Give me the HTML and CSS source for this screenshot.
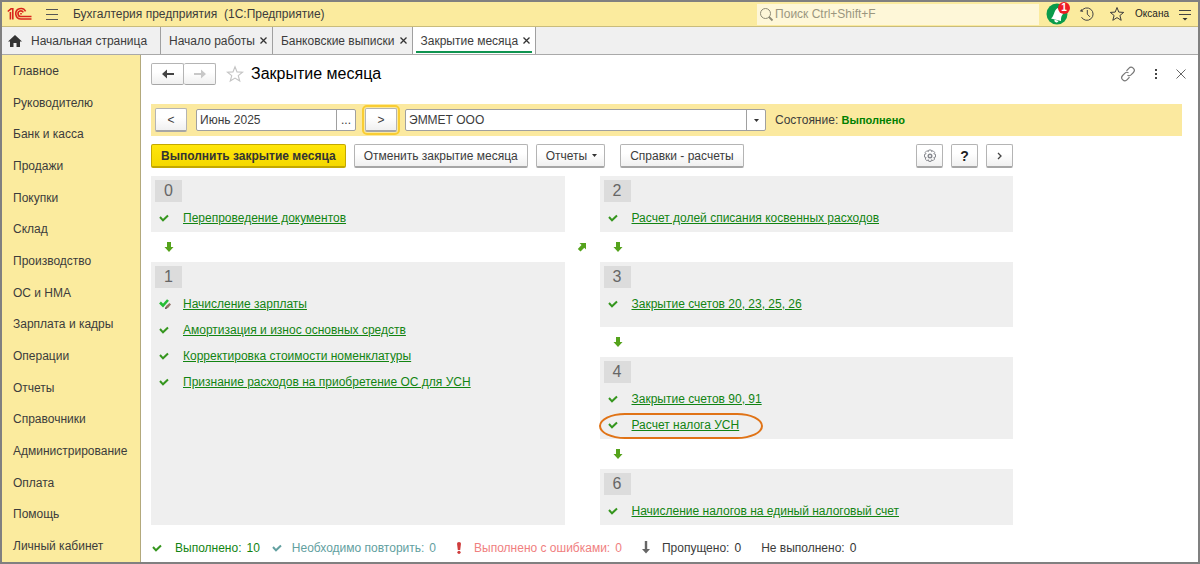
FILE: index.html
```
<!DOCTYPE html>
<html lang="ru">
<head>
    <meta charset="UTF-8">
    <meta name="viewport" content="width=device-width, initial-scale=1.0">
    <title>Закрытие месяца</title>
    <link rel="stylesheet" href="styles.css">
</head>
<body>
    <svg class="sprite" aria-hidden="true">
        <symbol id="check" viewBox="0 0 10 8"><path d="M1 3 4 6.300 9 1.500" fill="none" stroke="currentColor" stroke-width="2"/></symbol>
        <symbol id="down" viewBox="0 0 10 12"><path d="M3 1h4v5h2.500L5 11 .5 6H3z" fill="#55a31c"/></symbol>
        <symbol id="star" viewBox="0 0 16 16"><path d="M8 1.500l1.800 4.600 4.900.3-3.800 3.100 1.300 4.800L8 11.600l-4.200 2.700 1.300-4.800L1.300 6.400l4.900-.3z" fill="none" stroke="currentColor"/></symbol>
        <symbol id="close" viewBox="0 0 7 7"><path d="M.5.5l6 6M6.500.5l-6 6" stroke="#333" stroke-width="1.300"/></symbol>
    </svg>

    <header class="topbar">
        <svg class="logo" viewBox="0 0 26 14" role="img" aria-label="1С">
            <g fill="none" stroke="#d9261c" stroke-width="1.600">
                <path d="M.8 4.500 4 1.800h1.800V12.500M3.400 12.500V5"/>
                <path d="M18.600 4.400A5.200 5.200 0 1 0 14 12h10.500"/>
                <path d="M16.300 5.400A2.800 2.800 0 1 0 14 9.500h10.500"/>
                <path d="M13.200 6.800h1.600"/>
            </g>
        </svg>
        <button class="icon-btn burger" aria-label="Меню">
            <svg width="14" height="12" viewBox="0 0 14 12"><path d="M1 1.500h12M1 6.500h12M1 11.500h12" stroke="#555"/></svg>
        </button>
        <span class="app-name">Бухгалтерия предприятия&nbsp; (1С:Предприятие)</span>
        <label class="search">
            <svg width="15" height="15" viewBox="0 0 15 15" fill="none" stroke="#8d8a75"><circle cx="6.500" cy="6.500" r="5"/><path d="M10 10l3.500 3.500" stroke-width="1.800"/></svg>
            <input type="search" placeholder="Поиск Ctrl+Shift+F" aria-label="Поиск">
        </label>
        <button class="icon-btn bell" aria-label="Уведомления">
            <svg width="22" height="22" viewBox="0 0 22 22"><circle cx="11" cy="11" r="10.500" fill="#0a9b4b"/><path d="M5 15.500C8.500 13 7.500 8 11.500 5l6 5.500c-2 2-2.500 3.500-2.500 7.500z" fill="#fff"/><path d="M8.500 16.500l4 1.500a2 2 0 0 1-4-1.500z" fill="#fff"/></svg>
            <span class="badge">1</span>
        </button>
        <button class="icon-btn clock" aria-label="История">
            <svg width="16" height="16" viewBox="0 0 16 16" fill="none" stroke="#444"><path d="M2.400 5.200a6.200 6.200 0 1 1 .1 6M8.300 4v4.200l2.600 2.600"/><path d="M.8 5.200l3.500.8-1.800-3z" fill="#444" stroke="none"/></svg>
        </button>
        <button class="icon-btn" aria-label="Избранное"><svg width="16" height="16"><use href="#star"/></svg></button>
        <span class="user">Оксана</span>
        <button class="icon-btn" aria-label="Настройки окна">
            <svg width="14" height="14" viewBox="0 0 14 14"><path d="M1 3.500h12M1 7.500h12" stroke="#444"/><path d="M4.500 11h5L7 13.500z" fill="#333"/></svg>
        </button>
    </header>

    <nav class="tabs">
        <a class="tab home" href="#">
            <svg width="14" height="12" viewBox="0 0 14 12"><path d="M7 0l7 6.500h-2V12H8.500V8h-3v4H2V6.500H0z" fill="#333"/></svg>
            Начальная страница
        </a>
        <div class="tab"><a href="#">Начало работы</a><button class="tab-close" aria-label="Закрыть"><svg width="7" height="7"><use href="#close"/></svg></button></div>
        <div class="tab"><a href="#">Банковские выписки</a><button class="tab-close" aria-label="Закрыть"><svg width="7" height="7"><use href="#close"/></svg></button></div>
        <div class="tab active"><a href="#">Закрытие месяца</a><button class="tab-close" aria-label="Закрыть"><svg width="7" height="7"><use href="#close"/></svg></button></div>
    </nav>

    <div class="workspace">
        <nav class="sidebar">
            <a href="#">Главное</a>
            <a href="#">Руководителю</a>
            <a href="#">Банк и касса</a>
            <a href="#">Продажи</a>
            <a href="#">Покупки</a>
            <a href="#">Склад</a>
            <a href="#">Производство</a>
            <a href="#">ОС и НМА</a>
            <a href="#">Зарплата и кадры</a>
            <a href="#">Операции</a>
            <a href="#">Отчеты</a>
            <a href="#">Справочники</a>
            <a href="#">Администрирование</a>
            <a href="#">Оплата</a>
            <a href="#">Помощь</a>
            <a href="#">Личный кабинет</a>
        </nav>

        <main class="content">
            <div class="title-row">
                <div class="history">
                    <button class="btn" aria-label="Назад"><svg width="14" height="10" viewBox="0 0 14 10"><path d="M1 5l5-4.500V4h7v2H6v3.500z" fill="#444"/></svg></button>
                    <button class="btn" aria-label="Вперед" disabled><svg width="14" height="10" viewBox="0 0 14 10"><path d="M13 5L8 .5V4H1v2h7v3.500z" fill="#c8c8c8"/></svg></button>
                </div>
                <button class="icon-btn fav" aria-label="В избранное"><svg width="18" height="18"><use href="#star"/></svg></button>
                <h1>Закрытие месяца</h1>
                <div class="window-tools">
                    <button class="icon-btn" aria-label="Ссылка">
                        <svg width="16" height="16" viewBox="0 0 16 16" fill="none" stroke="#777" stroke-width="1.200"><path d="M6.500 4.800l2.300-2.500a3 3 0 0 1 4.600 4.200l-2.400 2.400a3 3 0 0 1-3.500.4"/><path d="M9.500 11.200l-2.300 2.500a3 3 0 0 1-4.600-4.200L5 7.100a3 3 0 0 1 3.500-.4"/></svg>
                    </button>
                    <button class="icon-btn" aria-label="Еще"><svg width="4" height="12" fill="#444"><rect x="1" y="1" width="2" height="2"/><rect x="1" y="5" width="2" height="2"/><rect x="1" y="9" width="2" height="2"/></svg></button>
                    <button class="icon-btn" aria-label="Закрыть"><svg width="10" height="10"><path d="M.5.5l9 9M9.500.5l-9 9" stroke="#666"/></svg></button>
                </div>
            </div>

            <div class="period">
                <button class="btn step" aria-label="Предыдущий месяц">&lt;</button>
                <div class="field month">
                    <input type="text" value="Июнь 2025" aria-label="Период">
                    <button aria-label="Выбрать период">...</button>
                </div>
                <button class="btn step focused" aria-label="Следующий месяц">&gt;</button>
                <div class="field company">
                    <input type="text" value="ЭММЕТ ООО" aria-label="Организация">
                    <button aria-label="Выбрать организацию"><svg width="5" height="3"><path d="M0 0h5L2.500 3z" fill="#333"/></svg></button>
                </div>
                <span class="state">Состояние: <strong>Выполнено</strong></span>
            </div>

            <div class="toolbar">
                <button class="btn primary">Выполнить закрытие месяца</button>
                <button class="btn">Отменить закрытие месяца</button>
                <button class="btn reports">Отчеты <svg width="5" height="3"><path d="M0 0h5L2.500 3z" fill="#333"/></svg></button>
                <button class="btn refs">Справки - расчеты</button>
                <div class="toolbar-right">
                    <button class="btn" aria-label="Настройка">
                        <svg width="14" height="14" viewBox="0 0 14 14" fill="none" stroke="#87898f"><circle cx="7" cy="7" r="1.800" stroke-width="1.400"/><path d="M5.800 1h2.400l.4 1.600 1.400-.9 1.700 1.700-.9 1.500 1.700.4v2.800l-1.700.4.9 1.500-1.700 1.700-1.500-.9-.4 1.600H5.800l-.4-1.600-1.500.9L2.200 10l.9-1.500-1.600-.4V5.300l1.600-.4-.9-1.500 1.700-1.700 1.500.9z"/></svg>
                    </button>
                    <button class="btn help">?</button>
                    <button class="btn" aria-label="Развернуть"><svg width="6" height="8"><path d="M1 1l3 3-3 3" fill="none" stroke="#444" stroke-width="1.300"/></svg></button>
                </div>
            </div>

            <div class="stages">
                <div class="column">
                    <section class="stage">
                        <h2>0</h2>
                        <ul>
                            <li><svg class="check"><use href="#check"/></svg><a href="#">Перепроведение документов</a></li>
                        </ul>
                    </section>
                    <div class="arrow"><svg width="10" height="12"><use href="#down"/></svg></div>
                    <section class="stage grow">
                        <h2>1</h2>
                        <ul>
                            <li>
                                <svg class="check-edit" viewBox="0 0 13 12"><path d="M1 4.500l3 3L9 2" fill="none" stroke="#26bd35" stroke-width="2.600"/><path d="M6 11l1-3 3.500-3L12 6.500 9 10z" fill="#927568"/><path d="M6 11l.8-2 1.200 1.200z" fill="#333"/></svg>
                                <a href="#">Начисление зарплаты</a>
                            </li>
                            <li><svg class="check"><use href="#check"/></svg><a href="#">Амортизация и износ основных средств</a></li>
                            <li><svg class="check"><use href="#check"/></svg><a href="#">Корректировка стоимости номенклатуры</a></li>
                            <li><svg class="check"><use href="#check"/></svg><a href="#">Признание расходов на приобретение ОС для УСН</a></li>
                        </ul>
                    </section>
                </div>

                <div class="link-up">
                    <svg width="10" height="10" viewBox="0 0 10 10"><path d="M2.500 1H9v6.500L7.300 5.800 3.500 9.500.8 7l3.700-4z" fill="#55a31c"/></svg>
                </div>

                <div class="column">
                    <section class="stage">
                        <h2>2</h2>
                        <ul>
                            <li><svg class="check"><use href="#check"/></svg><a href="#">Расчет долей списания косвенных расходов</a></li>
                        </ul>
                    </section>
                    <div class="arrow"><svg width="10" height="12"><use href="#down"/></svg></div>
                    <section class="stage tall">
                        <h2>3</h2>
                        <ul>
                            <li><svg class="check"><use href="#check"/></svg><a href="#">Закрытие счетов 20, 23, 25, 26</a></li>
                        </ul>
                    </section>
                    <div class="arrow"><svg width="10" height="12"><use href="#down"/></svg></div>
                    <section class="stage">
                        <h2>4</h2>
                        <ul>
                            <li><svg class="check"><use href="#check"/></svg><a href="#">Закрытие счетов 90, 91</a></li>
                            <li class="marked"><svg class="check"><use href="#check"/></svg><a href="#">Расчет налога УСН</a></li>
                        </ul>
                    </section>
                    <div class="arrow"><svg width="10" height="12"><use href="#down"/></svg></div>
                    <section class="stage">
                        <h2>6</h2>
                        <ul>
                            <li><svg class="check"><use href="#check"/></svg><a href="#">Начисление налогов на единый налоговый счет</a></li>
                        </ul>
                    </section>
                </div>
            </div>

            <footer class="legend">
                <span class="done"><svg class="check"><use href="#check"/></svg>Выполнено: <b>10</b></span>
                <span class="repeat"><svg class="check"><use href="#check"/></svg>Необходимо повторить: <b>0</b></span>
                <span class="errors"><svg width="6" height="12" viewBox="0 0 6 12" fill="#cf3d3d"><path d="M1 1.500a2 1.500 0 0 1 4 0L4.200 8H1.800z"/><circle cx="3" cy="10.300" r="1.600"/></svg>Выполнено с ошибками: <b>0</b></span>
                <span class="skipped"><svg width="8" height="13" viewBox="0 0 8 13"><path d="M2.800 0h2.400v8H8l-4 4.500L0 8h2.800z" fill="#666"/></svg>Пропущено: <b>0</b></span>
                <span>Не выполнено: <b>0</b></span>
            </footer>
        </main>
    </div>
</body>
</html>
```
FILE: styles.css
```
*,
*::after {
    margin: 0;
    padding: 0;
    box-sizing: border-box;
}

body {
    min-height: 100vh;
    display: flex;
    flex-direction: column;
    border: 2px solid #808080;
    background: #fff;
    color: #3c3c3c;
    font-family: "Liberation Sans", Arial, sans-serif;
    font-size: 12px;
    line-height: 16px;
}

a {
    color: inherit;
    text-decoration: none;
}

button,
input {
    font: inherit;
    color: inherit;
}

svg {
    flex: none;
    display: block;
}

.sprite {
    display: none;
}

.icon-btn {
    display: flex;
    align-items: center;
    justify-content: center;
    background: none;
    border: none;
    cursor: pointer;
}

/* top bar */
.topbar {
    display: flex;
    align-items: center;
    height: 25px;
    padding: 0 6px 0 5px;
    background: #fbeb9e;
    border-bottom: 1px solid #c9bc7c;
}

.logo {
    width: 26px;
    height: 14px;
}

.burger {
    margin: 0 14px 0 12px;
}

.app-name {
    flex: 1;
}

.search {
    display: flex;
    align-items: center;
    gap: 1px;
    width: 282px;
    height: 21px;
    padding-left: 2px;
    margin-right: 7px;
    background: #fef7d8;
}

.search input {
    flex: 1;
    min-width: 0;
    background: none;
    border: none;
    outline: none;
}

.search input::placeholder {
    color: #9a967f;
}

.bell {
    position: relative;
    margin-right: 11px;
}

.badge {
    position: absolute;
    top: -1px;
    right: -2px;
    width: 12px;
    height: 12px;
    border-radius: 50%;
    background: #ee1c25;
    color: #fff;
    font-size: 10px;
    font-weight: bold;
    line-height: 12px;
}

.clock {
    margin-right: 14px;
}

.user {
    margin: 0 9px 0 10px;
    font-size: 10px;
    color: #222;
}

/* open windows */
.tabs {
    display: flex;
    height: 28px;
    background: #f0f0f0;
    border-bottom: 1px solid #a9a9a9;
}

.tab {
    display: flex;
    align-items: center;
    gap: 5px;
    padding: 0 5px 0 8px;
    border-right: 1px solid #a0a0a0;
}

.home {
    gap: 9px;
    width: 159px;
    padding-left: 6px;
}

.tab.active {
    background: linear-gradient(#0f9450, #0f9450) 3px 24px / calc(100% - 6px) 2px no-repeat #fff;
}

.tab-close {
    width: 7px;
    height: 7px;
    background: none;
    border: none;
}

.workspace {
    flex: 1;
    display: flex;
}

.sidebar {
    display: flex;
    flex-direction: column;
    width: 139px;
    background: #fbeb9e;
    border-right: 1px solid #b3a97c;
}

.sidebar a {
    flex: 1;
    display: flex;
    align-items: center;
    padding-left: 11px;
}

.content {
    flex: 1;
    display: flex;
    flex-direction: column;
    padding: 8px 16px 0 10px;
}

/* form title */
.title-row {
    display: flex;
    align-items: center;
    height: 22px;
    margin-bottom: 19px;
}

.btn {
    display: flex;
    align-items: center;
    justify-content: center;
    height: 24px;
    padding: 0 9px;
    background: linear-gradient(#fff 40%, #f0f0f0);
    border: 1px solid #b4b4b4;
    border-bottom: 2px solid #a6a6a6;
    border-radius: 2px;
    white-space: nowrap;
    cursor: pointer;
}

.history {
    display: flex;
}

.history .btn {
    width: 33px;
    height: 22px;
    padding: 0;
    border-bottom-width: 1px;
}

.history .btn + .btn {
    border-left: none;
    width: 32px;
}

.fav {
    margin: 0 7px 0 10px;
    color: #c4c4c4;
}

h1 {
    flex: 1;
    font-size: 16px;
    font-weight: normal;
    line-height: 22px;
    color: #000;
}

.window-tools {
    display: flex;
    align-items: center;
    gap: 18px;
    margin-right: -4px;
}

/* period and company */
.period {
    display: flex;
    align-items: center;
    height: 32px;
    padding-left: 4px;
    background: #fbe99f;
}

.step {
    width: 32px;
    padding: 0;
}

.focused {
    outline: 2px solid #f9cd33;
    outline-offset: 1px;
}

.field {
    display: flex;
    height: 22px;
    border: 1px solid #a0a0a0;
    border-radius: 2px;
    background: #fff;
}

.field input {
    flex: 1;
    min-width: 0;
    padding-left: 3px;
    border: none;
    outline: none;
    background: none;
}

.field button {
    display: flex;
    align-items: center;
    justify-content: center;
    width: 19px;
    background: none;
    border: none;
    border-left: 1px solid #a0a0a0;
}

.month {
    width: 160px;
    margin: 0 9px;
}

.company {
    width: 361px;
    margin: 0 9px 0 8px;
}

.state strong {
    font-size: 11px;
    color: #008000;
}

/* commands */
.toolbar {
    display: flex;
    gap: 8px;
    max-width: 862px;
    margin: 8px 0;
}

.primary {
    background: linear-gradient(#ffe60a, #f5d800);
    border-color: #c3a800;
    font-weight: bold;
    color: #333;
}

.reports {
    gap: 5px;
    padding-right: 7px;
}

.refs {
    margin-left: 7px;
}

.toolbar-right {
    display: flex;
    gap: 8px;
    margin-left: auto;
}

.toolbar-right .btn {
    width: 27px;
    padding: 0;
}

.help {
    font-size: 14px;
    font-weight: bold;
    color: #222;
}

/* closing stages */
.stages {
    display: grid;
    grid-template-columns: 1fr 35px 1fr;
    max-width: 862px;
}

.column {
    display: flex;
    flex-direction: column;
}

.stage {
    padding: 4px 4px 1px;
    background: #efefef;
}

.stage.grow {
    flex: 1;
}

.stage.tall {
    padding-bottom: 10px;
}

.stage h2 {
    width: 27px;
    margin-bottom: 3px;
    background: #dcdcdc;
    color: #666;
    font-size: 16px;
    font-weight: normal;
    line-height: 22px;
    text-align: center;
}

.stage ul {
    list-style: none;
}

.stage li {
    position: relative;
    display: flex;
    align-items: center;
    height: 26px;
    padding-left: 4px;
}

.stage a {
    color: #128412;
    text-decoration: underline;
}

.check {
    width: 10px;
    height: 8px;
    margin-right: 14px;
    color: #35961e;
}

.check-edit {
    width: 13px;
    height: 12px;
    margin-right: 11px;
}

/* callout around the tax line */
.marked::after {
    content: "";
    position: absolute;
    top: 1px;
    left: -5px;
    width: 164px;
    height: 26px;
    border: 2px solid #e07316;
    border-radius: 26px / 13px;
}

.arrow {
    display: flex;
    align-items: center;
    height: 30px;
    padding-left: 13px;
}

.link-up {
    display: flex;
    justify-content: center;
    padding-top: 66px;
}

/* totals */
.legend {
    display: flex;
    align-items: center;
    height: 37px;
    padding: 8px 0 0 1px;
    white-space: nowrap;
}

.legend span {
    display: flex;
    align-items: center;
    margin-right: 20px;
}

.legend b {
    margin-left: 5px;
    font-weight: normal;
    color: #333;
}

.legend svg {
    margin-right: 12px;
}

.legend .done {
    margin-right: 12px;
}

.legend .done svg {
    margin-right: 13px;
}

.legend .repeat svg {
    margin-right: 10px;
}

.legend .done,
.legend .done b {
    color: #128412;
}

.legend .repeat,
.legend .repeat b,
.legend .repeat .check {
    color: #62a0a0;
}

.legend .errors,
.legend .errors b {
    color: #f08080;
}
```
